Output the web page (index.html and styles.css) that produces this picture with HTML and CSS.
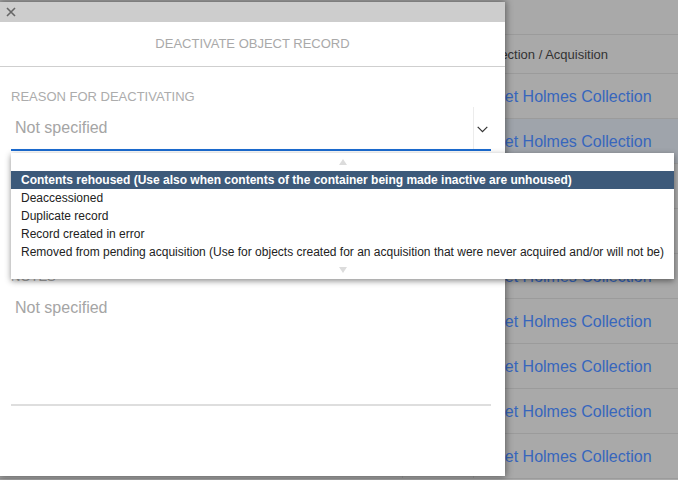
FILE: index.html
```html
<!DOCTYPE html>
<html>
<head>
<meta charset="utf-8">
<link rel="stylesheet" href="styles.css">
</head>
<body>
<div class="page">
  <div class="backdrop">
    <div class="toolbar"></div>
    <div class="row head"><div class="c c1"></div><div class="c c2"></div><div class="c c3">Collection / Acquisition</div></div>
    <div class="row"><div class="c c1"></div><div class="c c2"></div><div class="c c3 link">Janet Holmes Collection</div></div>
    <div class="row hover"><div class="c c1"></div><div class="c c2"></div><div class="c c3 link">Janet Holmes Collection</div></div>
    <div class="row"><div class="c c1"></div><div class="c c2"></div><div class="c c3 link">Janet Holmes Collection</div></div>
    <div class="row"><div class="c c1"></div><div class="c c2"></div><div class="c c3 link">Janet Holmes Collection</div></div>
    <div class="row"><div class="c c1"></div><div class="c c2"></div><div class="c c3 link">Janet Holmes Collection</div></div>
    <div class="row"><div class="c c1"></div><div class="c c2"></div><div class="c c3 link">Janet Holmes Collection</div></div>
    <div class="row"><div class="c c1"></div><div class="c c2"></div><div class="c c3 link">Janet Holmes Collection</div></div>
    <div class="row"><div class="c c1"></div><div class="c c2"></div><div class="c c3 link">Janet Holmes Collection</div></div>
    <div class="row"><div class="c c1"></div><div class="c c2"></div><div class="c c3 link">Janet Holmes Collection</div></div>
  </div>

  <div class="dialog">
    <div class="topbar">
      <svg class="close" width="10" height="10" viewBox="0 0 10 10"><path d="M1 1L9 9M9 1L1 9" stroke="#666" stroke-width="1.6" fill="none"/></svg>
    </div>
    <div class="title">DEACTIVATE OBJECT RECORD</div>
    <div class="body">
      <div class="label first">REASON FOR DEACTIVATING</div>
      <div class="select">
        <div class="value">Not specified</div>
        <div class="arrow">
          <svg width="11" height="7" viewBox="0 0 11 7"><path d="M0.7 0.8L5.5 5.6L10.3 0.8" stroke="#333" stroke-width="1.2" fill="none"/></svg>
        </div>
        <div class="listbox">
          <div class="scroll"><span class="tri up"></span></div>
          <div class="opt selected">Contents rehoused (Use also when contents of the container being made inactive are unhoused)</div>
          <div class="opt">Deaccessioned</div>
          <div class="opt">Duplicate record</div>
          <div class="opt">Record created in error</div>
          <div class="opt">Removed from pending acquisition (Use for objects created for an acquisition that were never acquired and/or will not be)</div>
          <div class="scroll"><span class="tri down"></span></div>
        </div>
      </div>
      <div class="label notes">NOTES</div>
      <div class="textarea">Not specified</div>
    </div>
  </div>
</div>
</body>
</html>
```
FILE: styles.css
```css
* { box-sizing: border-box; }
html, body { margin: 0; padding: 0; }
body {
  width: 678px;
  height: 480px;
  overflow: hidden;
  font-family: "Liberation Sans", Arial, sans-serif;
  background: #a9a9a9;
}
.page {
  position: relative;
  width: 678px;
  height: 480px;
}
.backdrop {
  display: flex;
  flex-direction: column;
}
.toolbar { height: 34px; }
.row {
  display: grid;
  grid-template-columns: 402px 71px 1fr;
  height: 45px;
  border-bottom: 1px solid #9b9b9b;
}
.row.head {
  height: 40px;
  border-top: 1px solid #9b9b9b;
  font-size: 13px;
  color: #333;
}
.row.hover { background: #9fa4ab; }
.c {
  display: flex;
  align-items: center;
  white-space: nowrap;
}
.c2, .c3 { border-left: 1px solid #9b9b9b; }
.head .c3 { padding-left: 4px; }
.link {
  font-size: 16px;
  color: #3766bd;
  padding-top: 2px;
  padding-left: 5px;
}

.dialog {
  position: absolute;
  left: 0;
  top: 2px;
  width: 505px;
  height: 474px;
  background: #fff;
  box-shadow: 0 0 7px 1px rgba(0,0,0,0.45);
}
.topbar {
  height: 20px;
  background: #cdcdcd;
  display: flex;
  align-items: center;
  padding-left: 6px;
}
.close { display: block; }
.title {
  height: 45px;
  line-height: 44px;
  border-bottom: 1px solid #cfcfcf;
  text-align: center;
  font-size: 13px;
  color: #a9a9a9;
}
.body {
  padding: 0 14px 0 11px;
}
.label {
  font-size: 13px;
  line-height: 16px;
  color: #acacac;
}
.label.first { margin-top: 22px; }
.label.notes { margin-top: 118px; }
.select {
  position: relative;
  width: 480px;
  height: 46px;
  border-bottom: 2px solid #1b6bd0;
  display: flex;
}
.value {
  flex: 1;
  padding: 2px 0 0 4px;
  display: flex;
  align-items: center;
  font-size: 16px;
  color: #a5a5a5;
}
.arrow {
  width: 18px;
  margin-top: 2px;
  border-left: 1px solid #ececec;
  display: flex;
  align-items: center;
  justify-content: center;
  padding-top: 2px;
}
.arrow svg { display: block; }
.listbox {
  position: absolute;
  left: 0;
  top: 48px;
  width: 663px;
  background: #fff;
  box-shadow: 0 2px 6px rgba(0,0,0,0.45);
  z-index: 2;
}
.scroll {
  height: 18px;
  display: flex;
  align-items: center;
  justify-content: center;
}
.tri {
  width: 0;
  height: 0;
  border-left: 4.5px solid transparent;
  border-right: 4.5px solid transparent;
}
.tri.up { border-bottom: 6px solid #dcdcdc; }
.tri.down { border-top: 6px solid #dcdcdc; }
.opt {
  height: 18px;
  line-height: 18px;
  padding-left: 10px;
  font-size: 12px;
  color: #222;
  white-space: nowrap;
}
.opt.selected {
  background: #3d5a7a;
  color: #fff;
  font-weight: bold;
}
.textarea {
  width: 480px;
  height: 121px;
  padding: 13px 0 0 4px;
  border-bottom: 2px solid #dedede;
  font-size: 16px;
  line-height: 20px;
  color: #a5a5a5;
}
```
